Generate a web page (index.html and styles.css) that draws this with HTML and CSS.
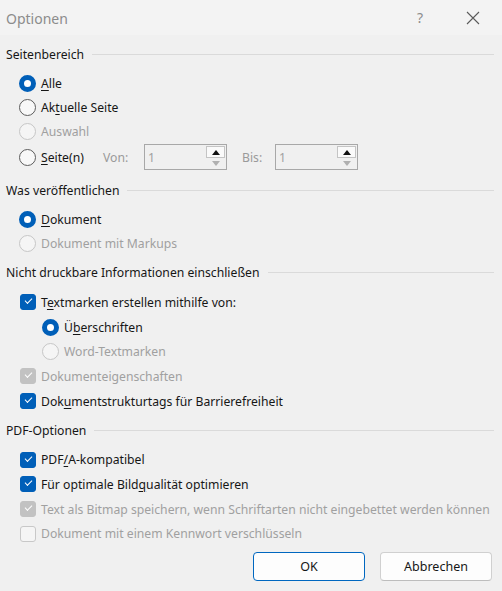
FILE: index.html
```html
<!DOCTYPE html>
<html lang="de">
<head>
    <meta charset="UTF-8">
    <title>Optionen</title>
    <link rel="stylesheet" href="styles.css">
</head>
<body>
    <div class="dialog">
        <div class="titlebar">
            <span class="title">Optionen</span>
            <span class="help">?</span>
            <span class="close">
                <svg width="14" height="14" viewBox="0 0 14 14"><path d="M1 1L13 13M13 1L1 13" stroke="#5a5a5a" stroke-width="1.1" fill="none"/></svg>
            </span>
        </div>

        <div class="content">
            <div class="section-head"><span>Seitenbereich</span><i></i></div>
            <div class="group tight">
                <label class="row"><span class="radio on"></span><span><u>A</u>lle</span></label>
                <label class="row"><span class="radio"></span><span>Ak<u>t</u>uelle Seite</span></label>
                <label class="row off"><span class="radio"></span><span>Auswahl</span></label>
                <div class="row pages">
                    <span class="radio"></span><span class="pages-label"><u>S</u>eite(n)</span>
                    <span class="field-label">Von:</span>
                    <span class="spin"><span class="value">1</span><span class="arrows"><b class="up"></b><b class="down"></b></span></span>
                    <span class="field-label">Bis:</span>
                    <span class="spin"><span class="value">1</span><span class="arrows"><b class="up"></b><b class="down"></b></span></span>
                </div>
            </div>

            <div class="section-head second"><span>Was veröffentlichen</span><i></i></div>
            <div class="group tight">
                <label class="row"><span class="radio on"></span><span><u>D</u>okument</span></label>
                <label class="row off"><span class="radio"></span><span>Dokument mit Markups</span></label>
            </div>

            <div class="section-head"><span>Nicht druckbare Informationen einschließen</span><i></i></div>
            <div class="group info">
                <label class="row"><span class="check on"></span><span>T<u>e</u>xtmarken erstellen mithilfe von:</span></label>
                <label class="row sub"><span class="radio on"></span><span>Ü<u>b</u>erschriften</span></label>
                <label class="row sub off"><span class="radio"></span><span>Word-Textmarken</span></label>
                <label class="row off"><span class="check on"></span><span>Dokumenteigenschaften</span></label>
                <label class="row"><span class="check on"></span><span>Dok<u>u</u>mentstrukturtags für Barrierefreiheit</span></label>
            </div>

            <div class="section-head last"><span>PDF-Optionen</span><i></i></div>
            <div class="group">
                <label class="row"><span class="check on"></span><span>PDF<u>/</u>A-kompatibel</span></label>
                <label class="row"><span class="check on"></span><span>Für optimale Bild<u>q</u>ualität optimieren</span></label>
                <label class="row off"><span class="check on"></span><span>Text als Bitmap speichern, wenn Schriftarten nicht eingebettet werden können</span></label>
                <label class="row off"><span class="check"></span><span>Dokument mit einem Kennwort verschlüsseln</span></label>
            </div>

            <div class="buttons">
                <button class="btn default">OK</button>
                <button class="btn">Abbrechen</button>
            </div>
        </div>
    </div>
</body>
</html>
```

FILE: styles.css
```css
body {
    margin: 0;
    background-color: #f0f0f0;
    font-family: 'Noto Sans', 'Open Sans', sans-serif;
    font-size: 12.2px;
    color: #161616;
}

.dialog {
    width: 502px;
    height: 591px;
    overflow: hidden;
}

.titlebar {
    height: 35px;
    display: flex;
    align-items: center;
    background-color: #f3f3f3;
    padding-left: 6px;
}

.title {
    flex: 1;
    font-size: 14px;
    color: #8c8c8c;
    margin-top: 1px;
}

.help {
    width: 20px;
    text-align: center;
    font-size: 14px;
    color: #8c8c8c;
    margin-right: 36px;
}

.close {
    width: 14px;
    height: 14px;
    margin-right: 22px;
    display: flex;
}

.content {
    padding: 8px 8px 0 6px;
}

.section-head {
    height: 22px;
    display: flex;
    align-items: center;
    gap: 8px;
}

.section-head i {
    flex: 1;
    height: 1px;
    background-color: #dadada;
}

.section-head.second {
    margin-top: 8px;
}

.section-head.last {
    margin-top: 4px;
}

.group {
    margin-top: 6px;
    margin-bottom: 6px;
}

.group.info {
    margin-top: 7px;
}

.row {
    height: 24.7px;
    display: flex;
    align-items: center;
    gap: 5px;
    padding-left: 13px;
    white-space: nowrap;
}

.tight .row {
    height: 24px;
}

.row.sub {
    padding-left: 36px;
}

.row.off {
    color: #a0a0a0;
}

.row.pages {
    height: 28px;
}

u {
    text-underline-offset: 2px;
    text-decoration-thickness: 1px;
}

/* radios */
.radio {
    width: 15px;
    height: 15px;
    border: 1px solid #5c5c5c;
    border-radius: 50%;
    background-color: #f8f8f8;
    flex: none;
}

.radio.on {
    border: 5px solid #005fb8;
    width: 7px;
    height: 7px;
    background-color: #fff;
}

.off .radio {
    border-color: #c6c6c6;
    background-color: #f5f5f5;
}

/* checkboxes */
.check {
    width: 16px;
    height: 16px;
    border: 1px solid #8e8e8e;
    border-radius: 3px;
    background-color: #f8f8f8;
    box-sizing: border-box;
    flex: none;
    margin-left: 1px;
    position: relative;
}

.check.on {
    background-color: #005fb8;
    border-color: #005fb8;
}

.check.on::after {
    content: '';
    position: absolute;
    left: 4px;
    top: 3px;
    width: 6px;
    height: 3px;
    border-left: 1.3px solid #fff;
    border-bottom: 1.3px solid #fff;
    transform: rotate(-45deg);
}

.off .check {
    border-color: #c8c8c8;
    background-color: #f5f5f5;
}

.off .check.on {
    background-color: #c2c2c2;
    border-color: #c2c2c2;
}

/* page range fields */
.pages-label {
    width: 57px;
}

.field-label {
    color: #9a9a9a;
    width: 36px;
}

.spin {
    width: 83px;
    height: 26px;
    border: 1px solid #a8a8a8;
    box-sizing: border-box;
    display: flex;
    background-color: #f0f0f0;
}

.spin + .field-label {
    margin-left: 10px;
    width: 28px;
}

.spin .value {
    flex: 1;
    color: #a0a0a0;
    padding: 4px 0 0 3px;
}

.arrows {
    width: 19px;
    display: flex;
    flex-direction: column;
    padding: 1px 1px 1px 0;
}

.arrows b {
    flex: 1;
    display: flex;
    align-items: center;
    justify-content: center;
}

.arrows .up {
    background-color: #fafafa;
    border: 1px solid #c4c4c4;
}

.arrows .up::after,
.arrows .down::after {
    content: '';
    border-left: 4px solid transparent;
    border-right: 4px solid transparent;
}

.arrows .up::after {
    border-bottom: 5px solid #111;
}

.arrows .down::after {
    border-top: 5px solid #b0b0b0;
}

/* buttons */
.buttons {
    display: flex;
    justify-content: flex-end;
    gap: 15px;
    margin-top: 6px;
    padding-right: 2px;
}

.btn {
    width: 112px;
    height: 29px;
    font-family: inherit;
    font-size: 12.5px;
    color: #161616;
    background-color: #fdfdfd;
    border: 1px solid #d0d0d0;
    border-bottom-color: #bdbdbd;
    border-radius: 4px;
}

.btn.default {
    border: 1px solid #0067c0;
}
```
